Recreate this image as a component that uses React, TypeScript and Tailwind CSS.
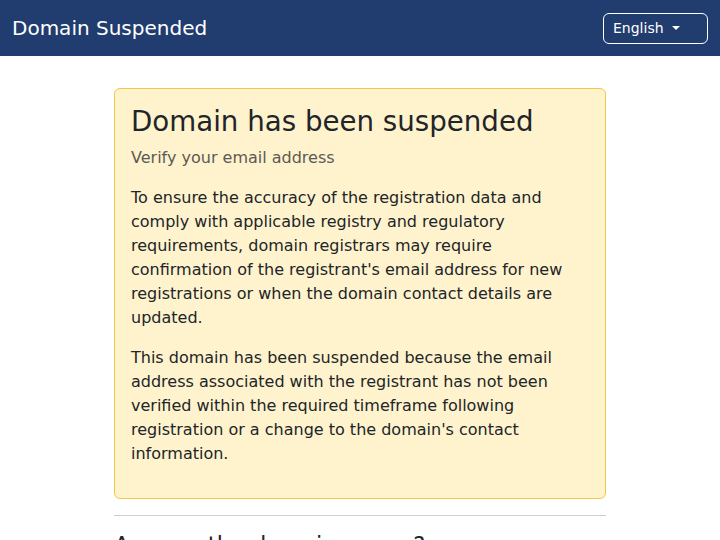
const font = { fontFamily: '"DejaVu Sans", "Noto Sans", sans-serif' };

const Navbar = () => (
  <nav className="flex h-14 items-center justify-between bg-[#213c6e] px-3 text-white">
    <span className="text-[20px] leading-[30px]">Domain Suspended</span>
    <button className="flex h-[31px] w-[105px] items-center rounded-md border border-white px-[9px] text-[14px] leading-[21px] text-white">
      English
      <span className="ml-[8px] inline-block h-0 w-0 border-x-[4px] border-t-[4px] border-x-transparent border-t-white" />
    </button>
  </nav>
);

const App = () => {
  return (
    <div className="min-h-screen bg-white text-[16px] leading-6 text-[#212529]" style={font}>
      <Navbar />
      <main className="mx-auto w-[492px] pt-8">
        <div className="rounded-md border border-[#f3c742] bg-[#fff3cd] p-4">
          <h2 className="mb-[8px] text-[27.68px] leading-[1.2] text-[#212529]">
            Domain has been suspended
          </h2>
          <p className="mb-4 text-[#5b5a55]">Verify your email address</p>
          <p className="mb-4">
            To ensure the accuracy of the registration data and comply with applicable registry and
            regulatory requirements, domain registrars may require confirmation of the registrant's
            email address for new registrations or when the domain contact details are updated.
          </p>
          <p className="mb-4">
            This domain has been suspended because the email address associated with the
            registrant has not been verified within the required timeframe following registration
            or a change to the domain's contact information.
          </p>
        </div>
        <hr className="mt-4 mb-[16px] border-t border-[#cfcfcf]" />
        <h4 className="text-[22.56px] leading-[1.2]">Are you the domain owner?</h4>
      </main>
    </div>
  );
};

export default App;
